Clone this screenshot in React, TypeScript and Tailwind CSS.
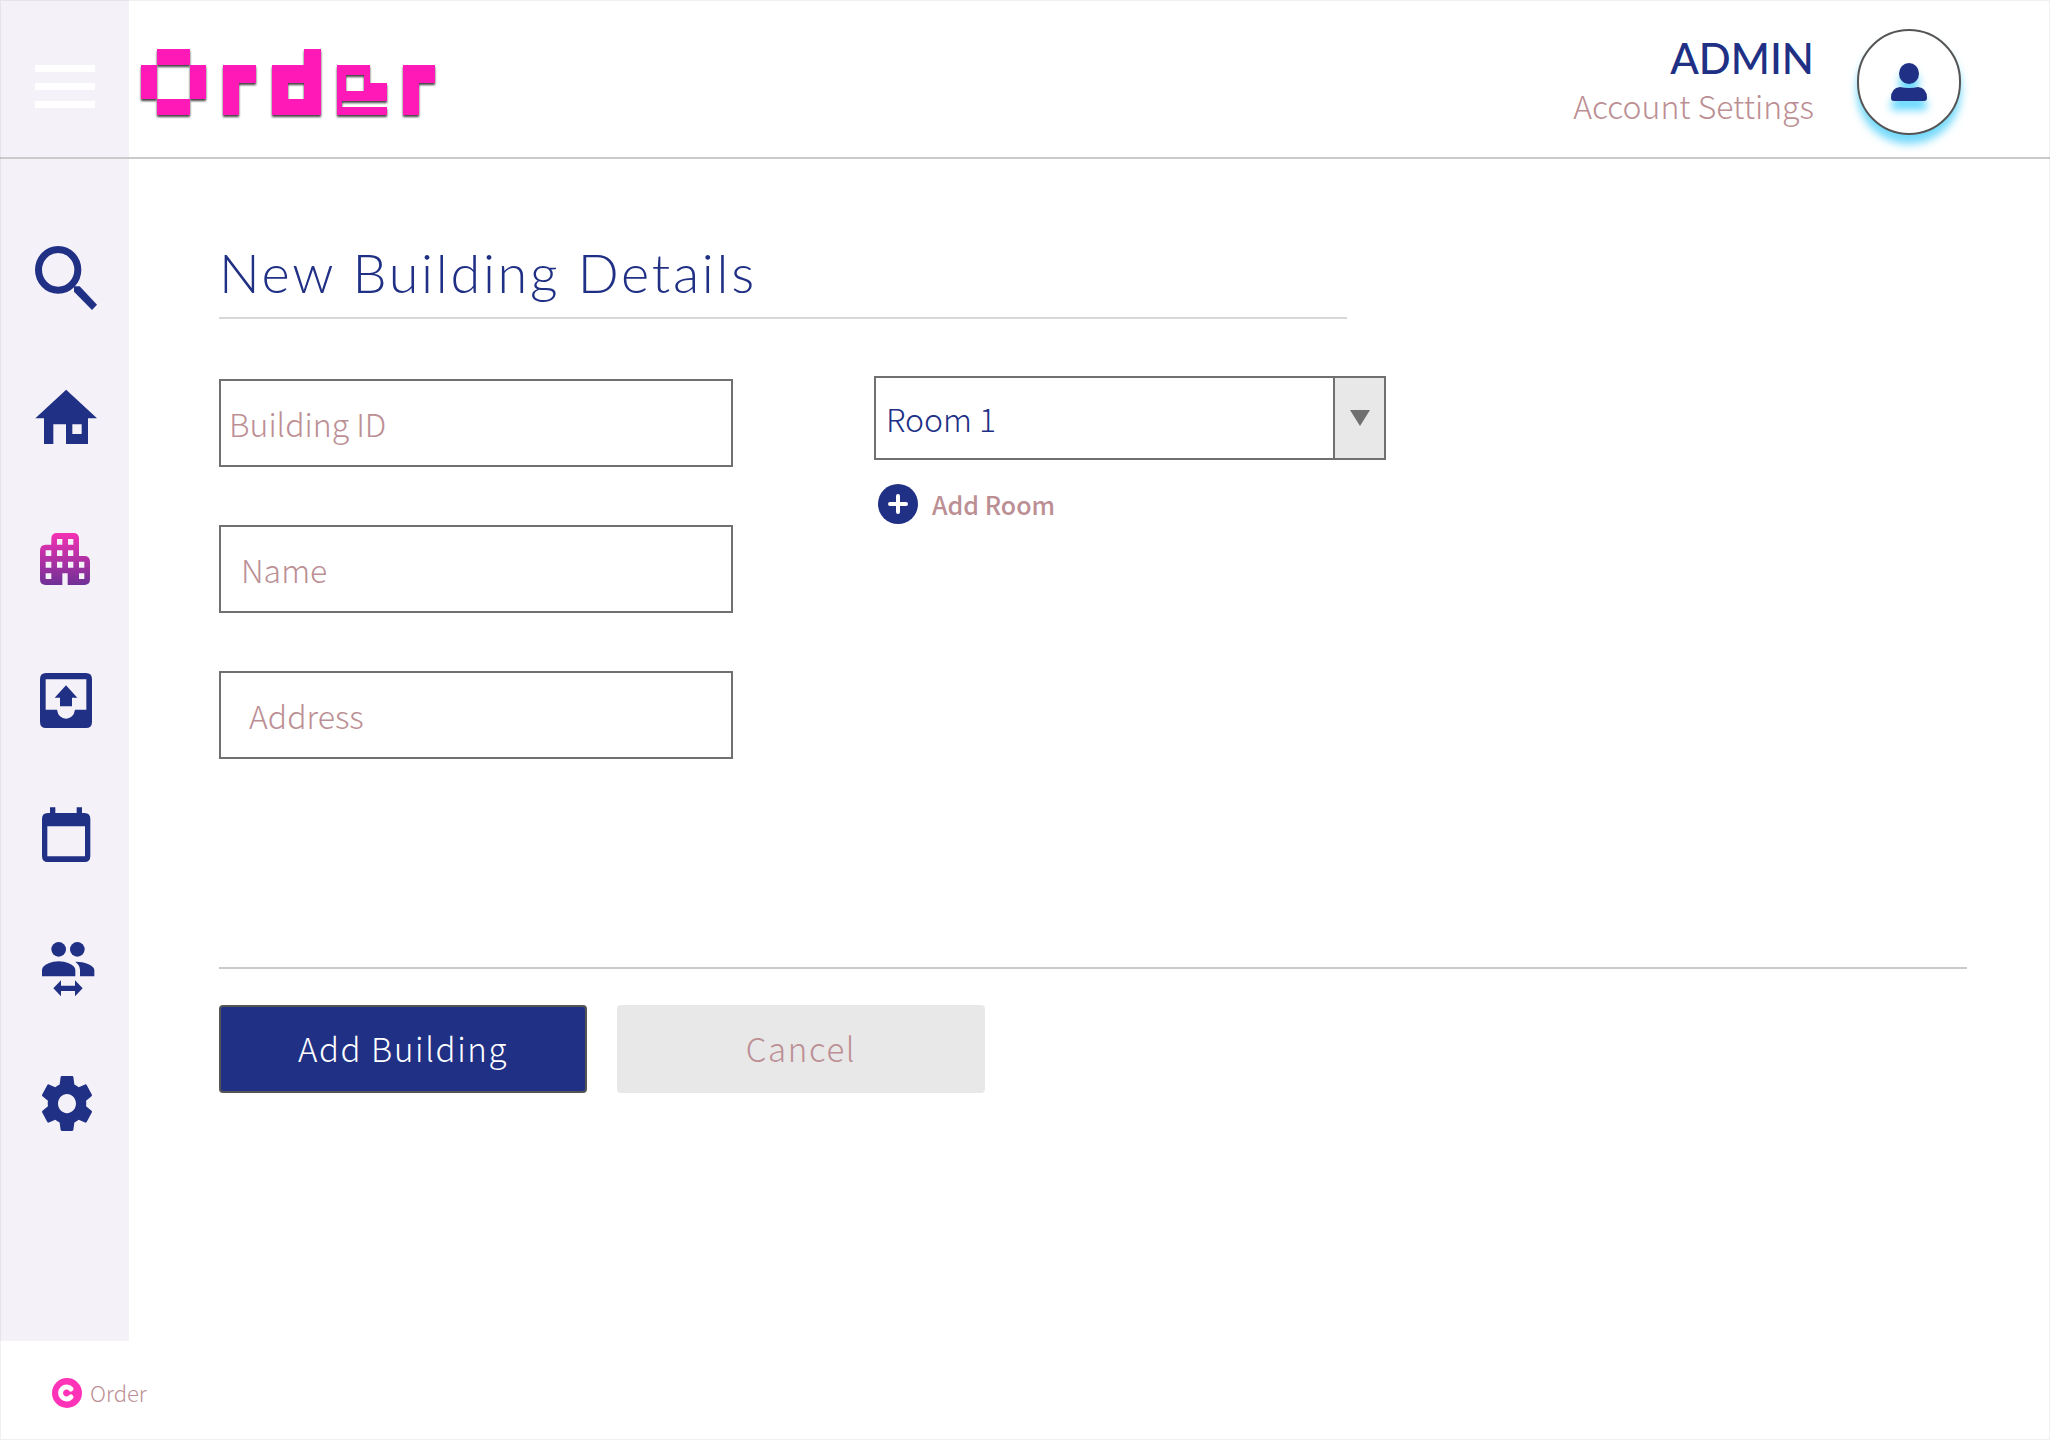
import React, { useState } from "react";

const SANS = "font-['Noto_Sans_CJK_SC','Noto_Sans',sans-serif]";

type Block = [x: number, y: number, w: number, h: number];

const LOGO_BLOCKS: Block[] = [
  // O
  [49, 0, 98, 49],
  [0, 49, 49, 101],
  [147, 49, 49, 101],
  [49, 150, 98, 49],
  // r
  [245, 49, 49, 150],
  [294, 49, 50, 52],
  // d
  [490, 0, 50, 199],
  [392, 49, 49, 150],
  [441, 49, 49, 52],
  [441, 150, 49, 49],
  // e
  [589, 49, 98, 28],
  [589, 77, 25, 78],
  [669, 77, 18, 48],
  [614, 125, 73, 30],
  [687, 101, 50, 54],
  [589, 155, 14, 44],
  [603, 173, 134, 26],
  // r
  [785, 49, 49, 150],
  [834, 49, 49, 52],
];

function Logo() {
  return (
    <svg
      role="img"
      aria-label="Order"
      viewBox="-9 -9 903 222"
      className="h-[74px] w-[301px] drop-shadow-[0_2px_1px_rgba(0,0,0,0.75)]"
      fill="#ff1ab8"
      shapeRendering="crispEdges"
    >
      {LOGO_BLOCKS.map(([x, y, w, h]) => (
        <rect key={`${x}-${y}`} x={x} y={y} width={w} height={h} />
      ))}
    </svg>
  );
}

function Icon({ viewBox, children }: { viewBox: string; children: React.ReactNode }) {
  return (
    <svg aria-hidden="true" viewBox={viewBox} className="size-[66px]" fill="#203085">
      {children}
    </svg>
  );
}

const NAV = [
  {
    label: "Search",
    box: "h-[140px]",
    icon: (
      <Icon viewBox="96 75 198 198">
        <ellipse cx="174.500" cy="149.500" rx="59" ry="61" fill="none" stroke="#203085" strokeWidth="21" />
        <path d="M222 199H239L291 254L276 270L222 215Z" />
      </Icon>
    ),
  },
  {
    label: "Home",
    box: "h-[140px]",
    icon: (
      <Icon viewBox="96 495 198 198">
        <path
          fillRule="evenodd"
          d="M198.500 509L291 595H264V672H198V613H160V672H132V595H106ZM217 613V642H245V613Z"
        />
      </Icon>
    ),
  },
  {
    label: "Buildings",
    box: "h-[140px]",
    icon: (
      <Icon viewBox="96 915 198 198">
        <defs>
          <linearGradient id="buildingFill" x1="0" y1="0" x2="0" y2="1">
            <stop offset="0" stopColor="#f531b3" />
            <stop offset="1" stopColor="#6f3096" />
          </linearGradient>
        </defs>
        <path
          fill="url(#buildingFill)"
          fillRule="evenodd"
          d="M171 939H220Q237 939 237 956V1008H253Q270 1008 270 1025V1078Q270 1095 253 1095H203V1060H187V1095H137Q120 1095 120 1078V992Q120 974 137 974H154V956Q154 939 171 939Z
          M171 957V974H187V957ZM204 957V974H220V957Z
          M137 991V1008H154V991ZM171 991V1008H187V991ZM204 991V1008H220V991Z
          M137 1025V1043H154V1025ZM171 1025V1043H187V1025ZM204 1025V1043H220V1025ZM237 1025V1043H253V1025Z
          M137 1060V1077H154V1060ZM237 1060V1077H253V1060Z"
        />
      </Icon>
    ),
  },
  {
    label: "Outbox",
    box: "h-[140px]",
    icon: (
      <Icon viewBox="96 75 198 198">
        <path
          fillRule="evenodd"
          d="M138 99H258Q276 99 276 118V245Q276 264 258 264H138Q120 264 120 245V118Q120 99 138 99ZM137 118V209H171Q173 222 180 229Q188 236 198 236Q208 236 216 229Q223 222 225 209H259V118Z"
        />
        <path d="M198 136L232 173H216V199H180V173H164Z" />
      </Icon>
    ),
  },
  {
    label: "Calendar",
    box: "h-[134px]",
    icon: (
      <Icon viewBox="96 486 198 198">
        <path
          fillRule="evenodd"
          d="M150 502H166V519H230V502H246V519H254Q271 519 271 537V648Q271 666 254 666H143Q126 666 126 648V537Q126 519 143 519H150ZM142 559V649H255V559Z"
        />
      </Icon>
    ),
  },
  {
    label: "People",
    box: "h-[134px]",
    icon: (
      <Icon viewBox="96 888 198 198">
        <circle cx="176" cy="928" r="22" />
        <circle cx="232" cy="928" r="22" />
        <path d="M126 1009V990C126 973 158 964 176 964C194 964 226 973 226 990V1009Z" />
        <path d="M240 1009V990C240 979 234 971 226 965C247 964 283 974 283 990V1009Z" />
        <path d="M160 1045L183 1021V1037H225V1021L248 1045L225 1069V1053H183V1069Z" />
      </Icon>
    ),
  },
  {
    label: "Settings",
    box: "h-[134px]",
    icon: (
      <Icon viewBox="96 1290 198 198">
        <path
          transform="translate(108.6 1291.5) scale(7.7 8.25)"
          d="M19.430 12.980c.04-.32.07-.64.07-.98s-.03-.66-.07-.98l2.110-1.650c.19-.15.24-.42.12-.64l-2-3.460c-.12-.22-.39-.3-.61-.22l-2.490 1c-.52-.4-1.080-.73-1.690-.98l-.38-2.650C14.460 2.180 14.250 2 14 2h-4c-.25 0-.46.18-.49.42l-.38 2.650c-.61.25-1.170.59-1.690.98l-2.490-1c-.23-.09-.49 0-.61.22l-2 3.460c-.13.22-.07.49.12.64l2.110 1.650c-.04.32-.07.65-.07.98s.03.66.07.98l-2.110 1.650c-.19.15-.24.42-.12.64l2 3.460c.12.22.39.3.61.22l2.490-1c.52.4 1.080.73 1.690.98l.38 2.650c.03.24.24.42.49.42h4c.25 0 .46-.18.49-.42l.38-2.650c.61-.25 1.170-.59 1.690-.98l2.490 1c.23.09.49 0 .61-.22l2-3.460c.12-.22.07-.49-.12-.64l-2.110-1.650zM12 15.500c-1.930 0-3.500-1.570-3.500-3.500s1.570-3.500 3.500-3.500 3.500 1.570 3.500 3.500-1.570 3.500-3.500 3.500z"
        />
      </Icon>
    ),
  },
];

function Header() {
  return (
    <header className="flex h-[159px] border-b-2 border-[#cacaca]">
      <div className="w-[129px] shrink-0 bg-[#f4f1f9] pt-[65px] pl-[35px]">
        <button type="button" aria-label="Menu" className="flex w-[60px] flex-col gap-[11px]">
          <span className="h-[7px] w-full bg-white" />
          <span className="h-[7px] w-full bg-white" />
          <span className="h-[7px] w-full bg-white" />
        </button>
      </div>
      <div className="flex flex-1 items-start justify-between pr-[89px] pl-[9px]">
        <div className="pt-[46px]">
          <Logo />
        </div>
        <div className="flex gap-[43px]">
          <div className="flex flex-col items-end pt-8">
            <span className="font-['Lato',sans-serif] text-[42px] leading-[52px] font-medium text-[#203085]">
              ADMIN
            </span>
            <a href="#account" className="text-[32px] leading-[42px] font-light text-[#bc8f94]">
              Account Settings
            </a>
          </div>
          <button
            type="button"
            aria-label="Account"
            className="mt-[29px] flex h-[106px] w-[104px] items-center justify-center rounded-full border-2 border-[#555] bg-white shadow-[0_9px_9px_#75dafb]"
          >
            <svg
              aria-hidden="true"
              viewBox="0 0 36 38"
              className="h-[38px] w-9 overflow-visible drop-shadow-[0_9px_4px_#65d8ff]"
              fill="#203085"
            >
              <ellipse cx="18" cy="10.500" rx="10" ry="10.500" />
              <path d="M9 24Q18 26 27 24Q36 25 36 35Q36 38 33 38H3Q0 38 0 35Q0 25 9 24Z" />
            </svg>
          </button>
        </div>
      </div>
    </header>
  );
}

function Field({ label, pad }: { label: string; pad: string }) {
  return (
    <input
      type="text"
      aria-label={label}
      placeholder={label}
      className={`block h-[88px] w-full border-2 border-[#707070] bg-white text-[32px] font-light text-[#203085] outline-none placeholder:text-[#bc8f94] ${pad}`}
    />
  );
}

function RoomPicker() {
  const [rooms, setRooms] = useState(["Room 1"]);
  return (
    <div className="-mt-[3px]">
      <div className="relative h-[84px] border-2 border-[#707070]">
        <select
          aria-label="Room"
          className="size-full appearance-none bg-white pl-[10px] text-[32px] font-light text-[#203085] outline-none"
        >
          {rooms.map((room) => (
            <option key={room}>{room}</option>
          ))}
        </select>
        <span className="pointer-events-none absolute inset-y-0 right-0 flex w-[51px] items-center justify-center border-l-2 border-[#707070] bg-[#e8e8e8]">
          <svg aria-hidden="true" viewBox="0 0 20 16" className="h-4 w-5" fill="#707070">
            <path d="M0 0H20L10 16Z" />
          </svg>
        </span>
      </div>
      <button
        type="button"
        onClick={() => setRooms([...rooms, `Room ${rooms.length + 1}`])}
        className="mt-6 ml-1 flex items-center gap-[14px] text-[25px] leading-10 font-medium text-[#bc8f94]"
      >
        <svg aria-hidden="true" viewBox="0 0 40 40" className="size-10">
          <circle cx="20" cy="20" r="20" fill="#203085" />
          <path d="M20 12V28M12 20H28" stroke="white" strokeWidth="4" strokeLinecap="round" />
        </svg>
        Add Room
      </button>
    </div>
  );
}

function NewBuilding() {
  return (
    <main className="flex-1 pt-[82px] pr-[83px] pl-[90px]">
      <form onSubmit={(e) => e.preventDefault()}>
        <h1 className="max-w-[1128px] border-b-2 border-[#d8d8d8] pb-3 font-['Lato',sans-serif] text-[54px] leading-16 font-light tracking-wider text-[#203085]">
          New Building Details
        </h1>
        <div className="mt-[60px] grid grid-cols-[minmax(0,514px)_minmax(0,512px)] gap-x-[141px]">
          <div className="flex flex-col gap-[58px]">
            <Field label="Building ID" pad="pl-2" />
            <Field label="Name" pad="pl-5" />
            <Field label="Address" pad="pl-7" />
          </div>
          <RoomPicker />
        </div>
        <div className="mt-[208px] flex gap-[30px] border-t-2 border-[#cacaca] pt-9">
          <button
            type="submit"
            className="h-[88px] w-[368px] rounded-sm border-2 border-[#555] bg-[#203085] text-[33px] font-light tracking-wider text-white"
          >
            Add Building
          </button>
          <button
            type="button"
            className="h-[88px] w-[368px] rounded-sm bg-[#e8e8e8] text-[33px] font-light tracking-wider text-[#bc8f94]"
          >
            Cancel
          </button>
        </div>
      </form>
    </main>
  );
}

export default function App() {
  return (
    <div
      className={`flex min-h-screen flex-col bg-white outline -outline-offset-1 outline-[#707070]/10 ${SANS}`}
    >
      <Header />
      <div className="flex flex-1">
        <nav aria-label="Main" className="flex w-[129px] shrink-0 flex-col bg-[#f4f1f9] pt-[49px] pl-8">
          {NAV.map(({ label, box, icon }) => (
            <a key={label} href={`#${label.toLowerCase()}`} aria-label={label} className={`flex items-center ${box}`}>
              {icon}
            </a>
          ))}
        </nav>
        <NewBuilding />
      </div>
      <footer className="flex h-[99px] items-center gap-2 pt-1 pl-[52px] text-[22px] font-light text-[#bc8f94]">
        <svg aria-hidden="true" viewBox="0 0 30 30" className="size-[30px]">
          <circle cx="15" cy="15" r="15" fill="#ff33b8" />
          <path d="M19 11A6 6 0 1 0 19 19" fill="none" stroke="white" strokeWidth="5" strokeLinecap="round" />
        </svg>
        Order
      </footer>
    </div>
  );
}
